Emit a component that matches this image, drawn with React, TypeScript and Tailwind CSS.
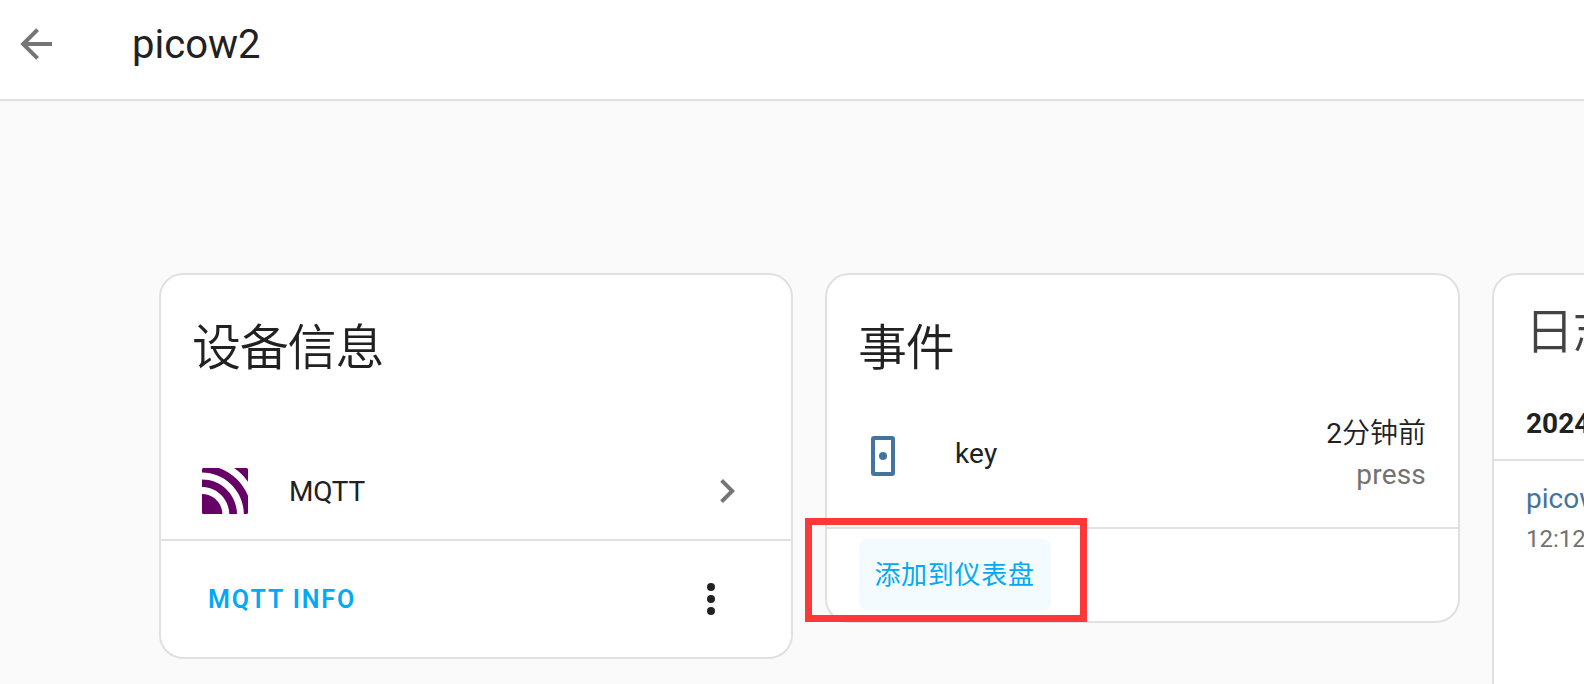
import type { ReactNode } from "react";

const LINE = "border-[#e0e0e0]";

function Icon({ d, className }: { d: string; className: string }) {
  return (
    <svg viewBox="0 0 24 24" fill="currentColor" className={`h-12 w-12 shrink-0 ${className}`}>
      <path d={d} />
    </svg>
  );
}

function MqttLogo() {
  return (
    <svg viewBox="0 0 24 24" fill="#660066" className="h-[46px] w-[46px] shrink-0">
      <path d="M10.657 24H.8A.8.8 0 0 1 0 23.2V13.608h.071c5.784 0 10.504 4.65 10.586 10.386ZM18.263 24H14.218C14.135 16.246 7.795 9.977 0 9.942V6.038h.071c9.983 0 18.121 8.044 18.192 17.956ZM23.2 24H21.823C21.754 12.071 11.995 2.407 0 2.372V.8A.8.8 0 0 1 .8 0H8.847C15.733 2.49 21.257 7.789 24 14.508V23.2A.8.8 0 0 1 23.2 24ZM16.713 0H23.2A.8.8 0 0 1 24 .8V7.114c-.91-1.242-2.046-2.65-3.158-3.762C19.588 2.11 18.122.987 16.714 0Z" />
    </svg>
  );
}

function Card({ className, children }: { className: string; children: ReactNode }) {
  return (
    <section className={`shrink-0 rounded-3xl border-2 ${LINE} bg-white ${className}`}>
      {children}
    </section>
  );
}

export default function App() {
  return (
    <div className="flex h-[684px] w-[1584px] flex-col overflow-hidden bg-[#fafafa] font-['Roboto','Noto_Sans_CJK_SC',sans-serif] text-[28px] leading-10 text-[#212121]">
      <header className={`flex h-[101px] shrink-0 items-start border-b-2 ${LINE} bg-white pl-3`}>
        <Icon
          className="mt-5 text-[#757575]"
          d="M20,11V13H8L13.5,18.5L12.08,19.92L4.16,12L12.08,4.08L13.5,5.5L8,11H20Z"
        />
        <h1 className="mt-[21px] ml-[72px] text-[40px] leading-12">picow2</h1>
      </header>

      <main className="flex items-start pt-[172px] pl-[159px]">
        <Card className="h-[386px] w-[634px]">
          <div className="flex h-[264px] flex-col">
            <h2 className="mt-[26px] ml-[31px] text-[49px] leading-24 font-[350] tracking-[-1.2px]">设备信息</h2>
            <div className="mt-[70px] flex h-12 items-center pl-[41px]">
              <MqttLogo />
              <span className="mt-0.5 ml-[41px] tracking-[-0.2px]">MQTT</span>
              <Icon
                className="mr-[40px] ml-auto text-[#757575]"
                d="M8.59,16.58L13.17,12L8.59,7.41L10,6L16,12L10,18L8.59,16.58Z"
              />
            </div>
          </div>
          <div className={`flex h-[118px] items-center border-t-2 ${LINE} pr-14 pl-[47px]`}>
            <button className="pt-px text-[25px] font-semibold tracking-[1.9px] text-[#03a9f4]">MQTT INFO</button>
            <Icon
              className="ml-auto"
              d="M12,16A2,2 0 0,1 14,18A2,2 0 0,1 12,20A2,2 0 0,1 10,18A2,2 0 0,1 12,16M12,10A2,2 0 0,1 14,12A2,2 0 0,1 12,14A2,2 0 0,1 10,12A2,2 0 0,1 12,10M12,4A2,2 0 0,1 14,6A2,2 0 0,1 12,8A2,2 0 0,1 10,6A2,2 0 0,1 12,4Z"
            />
          </div>
        </Card>

        <Card className="relative ml-8 h-[350px] w-[635px]">
          <div className="flex h-[252px] flex-col">
            <h2 className="mt-[26px] ml-[31px] text-[49px] leading-24 font-[350] tracking-[-1.2px]">事件</h2>
            <div className="mt-[14px] flex items-center pr-8 pl-8">
              <Icon
                className="mt-1 text-[#44739e]"
                d="M7.5,2H16.5A1.5,1.5 0 0,1 18,3.5V20.5A1.5,1.5 0 0,1 16.5,22H7.5A1.5,1.5 0 0,1 6,20.5V3.5A1.5,1.5 0 0,1 7.5,2M8,4V20H16V4H8M12,10A2,2 0 0,1 14,12A2,2 0 0,1 12,14A2,2 0 0,1 10,12A2,2 0 0,1 12,10Z"
              />
              <span className="ml-12 tracking-[0.2px]">key</span>
              <div className="ml-auto flex flex-col pt-0.5 text-right">
                <span className="leading-[42px]">
                  2<span className="font-[350]">分钟前</span>
                </span>
                <span className="-mt-px leading-[42px] tracking-[0.2px] text-[#727272]">press</span>
              </div>
            </div>
          </div>
          <div className={`border-t-2 ${LINE} pt-[10px] pl-8`}>
            <button className="h-[72px] w-48 rounded-lg bg-[#f4fbff] pr-px text-[26px] tracking-[0.7px] text-[#03a9f4]">
              添加到仪表盘
            </button>
          </div>
          <div className="absolute top-[243px] left-[-22px] h-[104px] w-[282px] border-[7px] border-[#fd3838]" />
        </Card>

        <Card className="ml-8 h-[620px] w-[635px]">
          <div className="h-[184px] pl-[31px]">
            <h2 className="pt-[10px] text-[49px] leading-24 font-[350] tracking-[-1.2px] text-[#434343]">日志</h2>
            <h3 className="mt-[23px] ml-px font-bold">2024年</h3>
          </div>
          <div className={`border-t-2 ${LINE} pt-[18px] pl-8`}>
            <p className="text-[#44739e]">picow2</p>
            <p className="text-[24px] text-[#727272]">12:12:00</p>
          </div>
        </Card>
      </main>
    </div>
  );
}
